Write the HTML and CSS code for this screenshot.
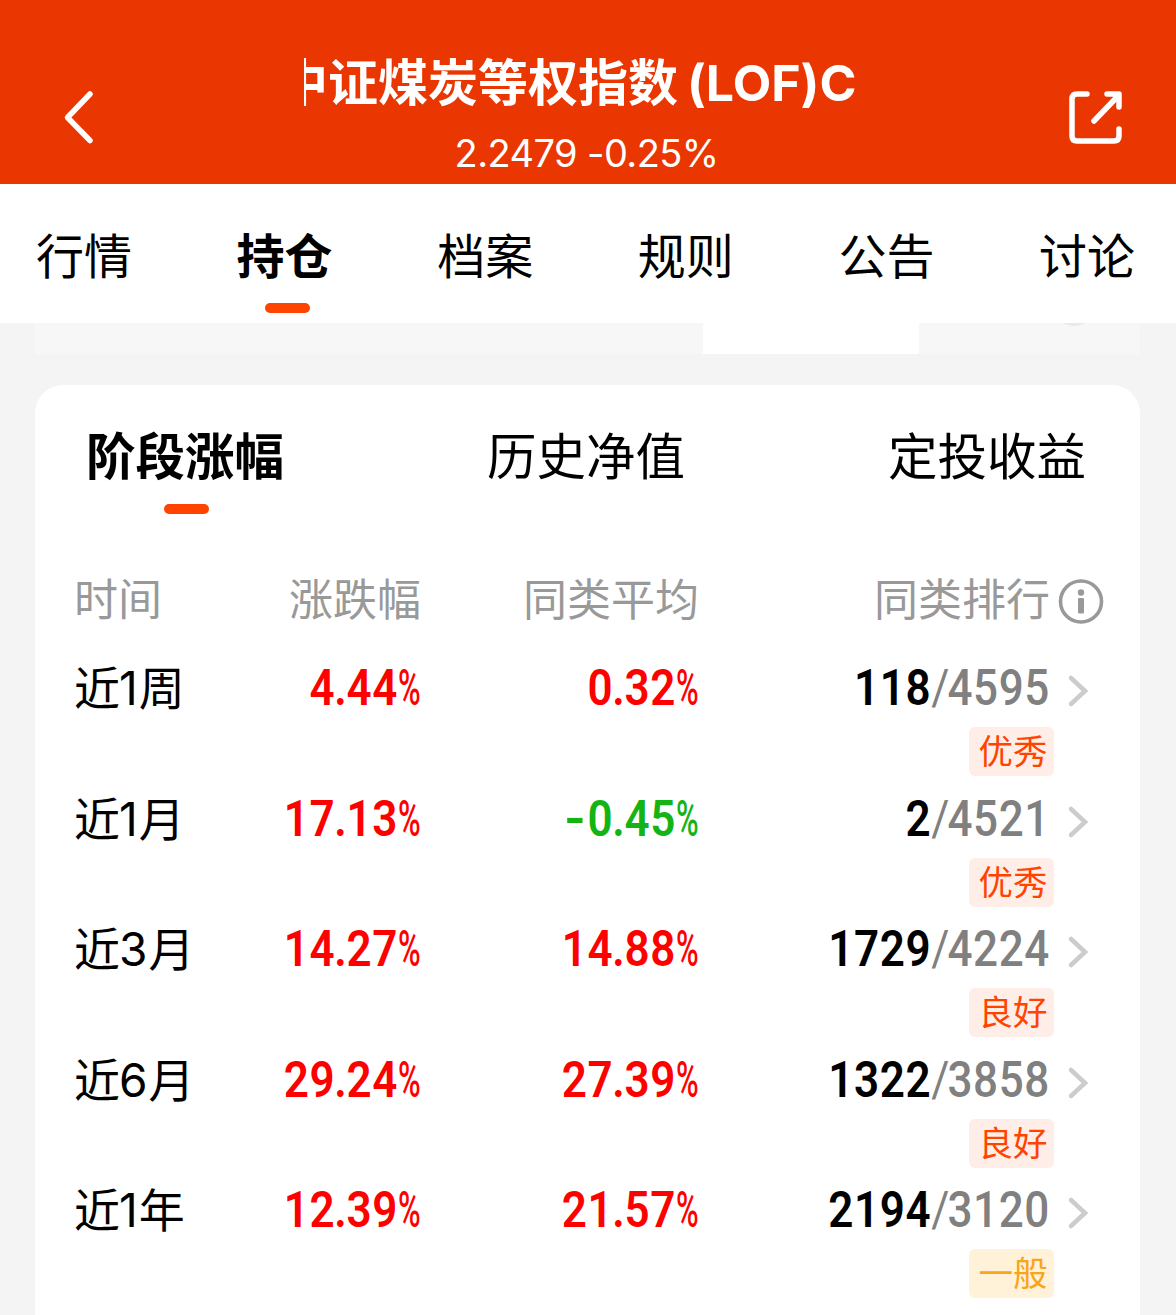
FILE: index.html
```html
<!DOCTYPE html>
<html lang="zh-CN">
<head>
  <meta charset="UTF-8">
  <meta name="viewport" content="width=device-width, initial-scale=1.0">
  <title>中证煤炭等权指数(LOF)C</title>
  <link rel="stylesheet" href="styles.css">
</head>
<body>

  <header class="header">
    <svg class="back" width="36" height="60" viewBox="0 0 36 60" fill="none" stroke="#fff" stroke-width="5.5" stroke-linecap="round" stroke-linejoin="round">
      <path d="M30 7 L7.500 30.500 L30 53.500"/>
    </svg>
    <div class="fund">
      <h1 class="fund-name"><span class="marquee">中证煤炭等权指数<span class="latin">(LOF)C</span></span></h1>
      <div class="fund-value">2.2479 -0.25%</div>
    </div>
    <svg class="share" width="60" height="60" viewBox="0 0 60 60" fill="none" stroke="#fff" stroke-width="5.500" stroke-linecap="round" stroke-linejoin="round">
      <path d="M21 7 H11 Q6 7 6 12 V49 Q6 54 11 54 H48 Q53 54 53 49 V42"/>
      <path d="M41 7 H53 V20 M28 34 L52 9"/>
      <path d="M49 8 L52 12"/>
    </svg>
  </header>

  <nav class="tabs">
    <a class="tab">行情</a>
    <a class="tab active">持仓</a>
    <a class="tab">档案</a>
    <a class="tab">规则</a>
    <a class="tab">公告</a>
    <a class="tab">讨论</a>
  </nav>

  <!-- bottom edge of the scrolled section -->
  <div class="strip">
    <div class="strip-selected"></div>
    <div class="strip-dot"></div>
  </div>

  <main class="card">
    <div class="card-tabs">
      <a class="card-tab active">阶段涨幅</a>
      <a class="card-tab">历史净值</a>
      <a class="card-tab">定投收益</a>
    </div>

    <div class="row row-head">
      <span>时间</span>
      <span class="right">涨跌幅</span>
      <span class="right">同类平均</span>
      <span class="right">同类排行</span>
      <svg class="info" width="46" height="46" viewBox="0 0 46 46">
        <circle cx="23" cy="22.500" r="20.500" fill="none" stroke="#999" stroke-width="3.600"/>
        <circle cx="23" cy="13.500" r="3.200" fill="#999"/>
        <rect x="20" y="19" width="6" height="15.500" rx="1" fill="#999"/>
      </svg>
    </div>

    <div class="row">
      <span class="period">近<i>1</i>周</span>
      <span class="num up">4<i>.</i>44<b>%</b></span>
      <span class="num up">0<i>.</i>32<b>%</b></span>
      <span class="num rank">118<em><s>/</s>4595</em></span>
      <svg class="arrow" width="24" height="36" viewBox="0 0 24 36"><path d="M4 5 L18 18 L4 31"/></svg>
      <span class="tag">优秀</span>
    </div>

    <div class="row">
      <span class="period">近<i>1</i>月</span>
      <span class="num up">17<i>.</i>13<b>%</b></span>
      <span class="num down"><u>-</u>0<i>.</i>45<b>%</b></span>
      <span class="num rank">2<em><s>/</s>4521</em></span>
      <svg class="arrow" width="24" height="36" viewBox="0 0 24 36"><path d="M4 5 L18 18 L4 31"/></svg>
      <span class="tag">优秀</span>
    </div>

    <div class="row">
      <span class="period">近<i>3</i>月</span>
      <span class="num up">14<i>.</i>27<b>%</b></span>
      <span class="num up">14<i>.</i>88<b>%</b></span>
      <span class="num rank">1729<em><s>/</s>4224</em></span>
      <svg class="arrow" width="24" height="36" viewBox="0 0 24 36"><path d="M4 5 L18 18 L4 31"/></svg>
      <span class="tag">良好</span>
    </div>

    <div class="row">
      <span class="period">近<i>6</i>月</span>
      <span class="num up">29<i>.</i>24<b>%</b></span>
      <span class="num up">27<i>.</i>39<b>%</b></span>
      <span class="num rank">1322<em><s>/</s>3858</em></span>
      <svg class="arrow" width="24" height="36" viewBox="0 0 24 36"><path d="M4 5 L18 18 L4 31"/></svg>
      <span class="tag">良好</span>
    </div>

    <div class="row">
      <span class="period">近<i>1</i>年</span>
      <span class="num up">12<i>.</i>39<b>%</b></span>
      <span class="num up">21<i>.</i>57<b>%</b></span>
      <span class="num rank">2194<em><s>/</s>3120</em></span>
      <svg class="arrow" width="24" height="36" viewBox="0 0 24 36"><path d="M4 5 L18 18 L4 31"/></svg>
      <span class="tag normal">一般</span>
    </div>
  </main>

</body>
</html>
```

FILE: styles.css
```css
* {
  box-sizing: border-box;
}

body {
  margin: 0;
  height: 1315px;
  overflow: hidden;
  display: flex;
  flex-direction: column;
  background-color: #f4f4f4;
  color: #000;
  font-family: "Noto Sans CJK SC", sans-serif;
}

.header {
  flex: none;
  height: 184px;
  padding: 47px 50px 0 60px;
  display: flex;
  background-color: #ea3702;
  color: #fff;
}

.back,
.share {
  flex: none;
  margin-top: 40px;
}

.share {
  margin-left: auto;
}

.fund {
  width: 568px;
  margin-left: 208px;
}

.fund-name {
  margin: 0;
  height: 64px;
  overflow: hidden;
  font-size: 50px;
  font-weight: 700;
  line-height: 64px;
  white-space: nowrap;
}

.marquee {
  display: block;
  margin-left: -26px;
}

.latin {
  margin-left: 9px;
  font-family: Inter, sans-serif;
  font-size: 50px;
  font-weight: 650;
}

.fund-value {
  margin: 19px 3px 0 0;
  font-family: Inter, sans-serif;
  font-size: 38px;
  line-height: 46px;
  letter-spacing: -0.6px;
  text-align: center;
}

.tabs {
  flex: none;
  height: 139px;
  padding: 34px 41px 0 36px;
  display: flex;
  justify-content: space-between;
  background-color: #fff;
  font-size: 48px;
  line-height: 70px;
}

.tab.active,
.card-tab.active {
  font-weight: 700;
}

.tab.active::after,
.card-tab.active::after {
  content: "";
  display: block;
  width: 45px;
  height: 10px;
  margin: 15px auto 0 28px;
  border-radius: 5px;
  background-color: #ff4400;
}

.card-tab.active::after {
  margin-left: 78px;
}

.strip {
  flex: none;
  height: 31px;
  margin: 0 36px 31px 35px;
  padding-left: 668px;
  display: flex;
  overflow: hidden;
  background-color: #f7f7f7;
}

.strip-selected {
  width: 216px;
  background-color: #fff;
}

.strip-dot {
  width: 44px;
  height: 44px;
  margin: -41px 0 0 133px;
  border-radius: 50%;
  background-color: #e9e9e9;
}

.card {
  flex: 1 0 auto;
  margin: 0 36px 0 35px;
  border-radius: 28px 28px 0 0;
  background-color: #fff;
}

.card-tabs {
  height: 177px;
  padding: 34px 54px 0 51px;
  display: flex;
  justify-content: space-between;
  font-size: 49.5px;
  line-height: 70px;
}

.row {
  height: 130.5px;
  padding-left: 39px;
  display: grid;
  grid-template-columns: 126px 221px 278px 351px 60px;
  grid-template-rows: 70px 49px;
  row-gap: 4px;
}

.row-head {
  height: 91px;
  color: #999;
  font-size: 44px;
  line-height: 70px;
}

.right,
.num {
  text-align: right;
}

.info {
  margin: 17px 0 0 8px;
}

.period {
  font-size: 46px;
  line-height: 64px;
  white-space: nowrap;
}

.period i {
  margin: 0 1px 0 -1px;
  font-family: Inter, sans-serif;
  font-style: normal;
}

/* narrow digits */
.num {
  font-family: Roboto, sans-serif;
  font-size: 50px;
  font-weight: 650;
  line-height: 70px;
  letter-spacing: 0.7px;
  white-space: nowrap;
  transform: scaleX(0.88);
  transform-origin: right;
}

.num i {
  margin: 0 -1px;
  font-style: normal;
}

.num b {
  display: inline-block;
  width: 26px;
  font-weight: 500;
  letter-spacing: 0;
  text-align: left;
  transform: scaleX(0.7);
  transform-origin: left;
}

.num u {
  display: inline-block;
  margin-right: 4px;
  text-decoration: none;
  transform: scaleX(1.3);
}

.up {
  color: #ff0000;
}

.down {
  color: #14b414;
}

.rank em {
  color: #808080;
  font-style: normal;
  font-weight: 500;
}

.rank s {
  margin: 0 -3px 0 0;
  font-weight: 400;
  text-decoration: none;
}

.arrow {
  margin: 20px 0 0 17px;
  fill: none;
  stroke: #ccc;
  stroke-width: 4.5;
  stroke-linecap: round;
}

.tag {
  grid-column: 4;
  justify-self: end;
  width: 85px;
  height: 49px;
  margin-right: -4px;
  padding-left: 3px;
  border-radius: 6px;
  background-color: #ffede7;
  color: #ff4400;
  font-size: 34.5px;
  line-height: 45px;
  text-align: center;
}

.tag.normal {
  background-color: #fff2d9;
  color: #faa41a;
}
```
